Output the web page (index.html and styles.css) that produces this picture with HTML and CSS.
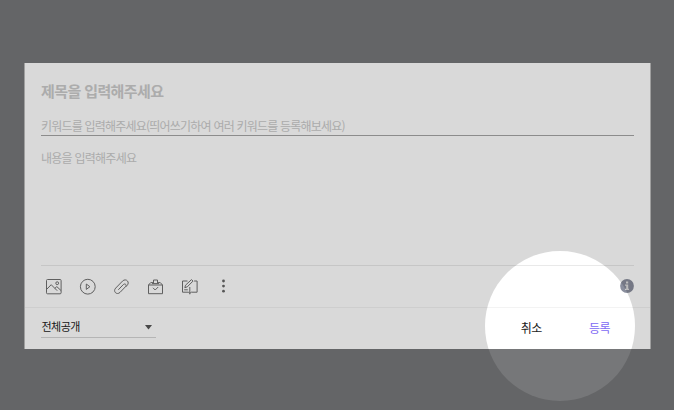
FILE: index.html
```html
<!DOCTYPE html>
<html lang="ko">
<head>
<meta charset="utf-8">
<title>글쓰기</title>
<link rel="stylesheet" href="styles.css">
</head>
<body>
<main class="dialog">
  <section class="editor">
    <h1 class="title">제목을 입력해주세요</h1>
    <p class="keywords">키워드를 입력해주세요(띄어쓰기하여 여러 키워드를 등록해보세요)</p>
    <p class="content">내용을 입력해주세요</p>
    <div class="toolbar">
      <svg class="icon" viewBox="0 0 18 18"><rect x="1.5" y="1.5" width="14.6" height="14.3" rx="1"/><path d="M1.5 11.5 6.2 6.7l6 6M9.8 10.4l2-1.8 4.3 4"/><circle cx="12.2" cy="5.2" r="1.4"/></svg>
      <svg class="icon" viewBox="0 0 18 18"><circle cx="8.8" cy="8.7" r="7.4"/><path d="M7.3 6v5.4l3.6-2.7z"/></svg>
      <svg class="icon" viewBox="0 0 18 18"><path d="M5.3 11.8l5-5.2c1.7-1.7 3.9.4 2.2 2.1l-5.4 5.6c-3.2 3.3-7.6-.9-4.4-4.2l6.8-7c3.3-3.3 7.8.9 4.6 4.3l-1.4 1.5"/></svg>
      <svg class="icon" viewBox="0 0 18 18"><path d="M1.5 7h14v8.7h-14zM1.5 7l2.2-2.4h2.5M11 4.6h2.3L15.5 7M6.5 5.5V2h4v3.5M5 5.6h7M6 9.8l2.2 2.2 3-3"/></svg>
      <svg class="icon" viewBox="0 0 18 18"><path d="M6.5 3h-5v11.2h5.8l1.5 1.2 1.5-1.2h5.8V3h-3M8.8 9v7.3M3.2 11.8h3.6M3.8 9.7l.7-2.5 6-5.6 1.5 1.5-5.7 5.7z"/></svg>
      <svg class="icon dots" viewBox="0 0 18 18"><circle cx="8.5" cy="3" r="1.4"/><circle cx="8.5" cy="8.1" r="1.4"/><circle cx="8.5" cy="13.2" r="1.4"/></svg>
      <svg class="info" viewBox="0 0 14 14"><circle cx="7" cy="7" r="6.9"/><path d="M6 2.6h2.2v1.8H6zM5 5.5h3.2v4.2H9V11H5V9.7h1.2V6.8H5z"/></svg>
    </div>
  </section>
  <footer class="footer">
    <div class="select"><span>전체공개</span><svg class="caret" viewBox="0 0 7 5"><path d="M0 0h7L3.5 4.6z"/></svg></div>
    <div class="actions"><span class="cancel">취소</span><span class="submit">등록</span></div>
  </footer>
</main>
<div class="spotlight"></div>
</body>
</html>
```

FILE: styles.css
```css
* { box-sizing: border-box; }
body {
  margin: 0;
  height: 410px;
  padding: 63px 23px 0 24px;
  position: relative;
  overflow: hidden;
  background: #767779;
  font-family: "Noto Sans CJK KR", sans-serif;
}
.dialog {
  height: 286px;
  background: #fff;
  border: solid #bbb;
  border-width: 0 1px;
}
.editor {
  height: 244px;
  padding: 16px 16.5px 0 16px;
  display: flex;
  flex-direction: column;
}
h1, p { margin: 0; white-space: nowrap; color: #cacaca; }
.title { height: 35px; font-size: 15px; line-height: 24px; font-weight: 700; letter-spacing: -0.6px; }
.keywords {
  height: 22px;
  padding-top: 2px;
  font-size: 12px;
  line-height: 20px;
  letter-spacing: -0.79px;
  border-bottom: 1px solid #a5a5a5;
}
.content { flex: 1; padding-top: 12px; font-size: 12px; line-height: 20px; letter-spacing: -0.75px; }
.toolbar {
  height: 42px;
  padding: 0 0 0 4px;
  display: flex;
  align-items: center;
  gap: 16px;
  border-top: 1px solid #e9e9e9;
}
.icon { width: 18px; height: 18px; fill: none; stroke: #707070; stroke-width: 1; stroke-linejoin: round; }
.dots { fill: #666; stroke: none; }
.info { width: 14px; height: 14px; margin: 0 0 1px auto; fill: #8a8e9d; }
.info path { fill: #ddd; }
.footer {
  height: 42px;
  padding: 0 40px 0 16px;
  display: flex;
  justify-content: space-between;
  border-top: 1px solid #f3f3f3;
}
.select {
  width: 115px;
  height: 30px;
  padding: 7px 4px 0 0.5px;
  display: flex;
  align-items: center;
  justify-content: space-between;
  border-bottom: 1px solid #d5d5d5;
  color: #222;
  font-size: 11px;
  line-height: 18px;
  letter-spacing: -0.5px;
}
.caret { width: 7px; height: 5px; margin-top: 2px; fill: #555; }
.actions { display: flex; gap: 47px; padding-top: 10px; font-size: 12px; line-height: 20px; letter-spacing: -0.5px; }
.cancel { color: #222; }
.submit { color: #8068f4; }
.spotlight {
  position: absolute;
  left: 485px;
  top: 251px;
  width: 150px;
  height: 150px;
  border-radius: 50%;
  box-shadow: 0 0 0 800px rgba(0, 0, 0, 0.15);
}
```
